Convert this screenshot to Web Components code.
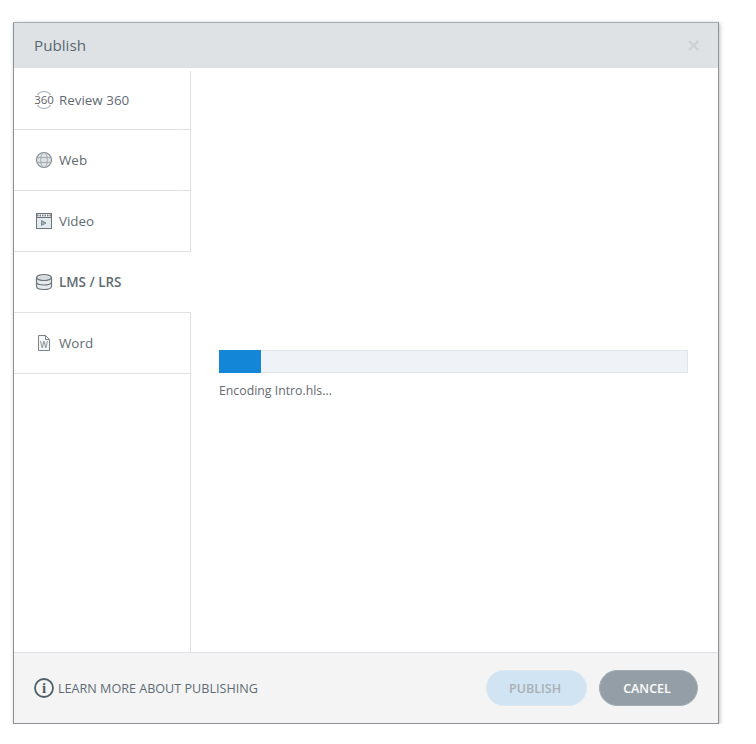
<!DOCTYPE html>
<html>
<head>
<meta charset="utf-8">
<title>Publish</title>
<style>
    html, body { margin: 0; background: #fff; }
    body { padding: 22px 0 0 13px; font-family: "Open Sans", "Liberation Sans", sans-serif; }
</style>
</head>
<body>
<publish-dialog>
    <span slot="title">Publish</span>
    <side-nav slot="nav">
        <nav-item>
            <svg slot="icon" width="20" height="20" viewBox="0 0 20 20" fill="none">
                <path d="M3.400 5a8 8 0 0 1 13.200 0M3.400 15a8 8 0 0 0 13.200 0" stroke="#9fb2bb" stroke-width="1.200"/>
                <text x="10" y="14" text-anchor="middle" font-family="Open Sans" font-size="11.500" fill="#5f6468">360</text>
            </svg>
            Review 360
        </nav-item>
        <nav-item>
            <svg slot="icon" width="20" height="20" viewBox="0 0 20 20" fill="none">
                <circle cx="10" cy="10" r="7.500" fill="#dbe1e4" stroke="#848b90" stroke-width="1.100"/>
                <ellipse cx="10" cy="10" rx="3.400" ry="7.500" stroke="#9aa2a7" stroke-width=".8"/>
                <path d="M3 7.500h14M3 12.500h14" stroke="#9aa2a7" stroke-width=".8"/>
            </svg>
            Web
        </nav-item>
        <nav-item>
            <svg slot="icon" width="20" height="20" viewBox="0 0 20 20" fill="none">
                <rect x="2.500" y="2.500" width="15" height="15" fill="#e2ebef" stroke="#6f767b"/>
                <path d="M3 3h14v3H3z" fill="#fff"/>
                <path d="M3 4.500h14" stroke="#6f767b" stroke-width="2" stroke-dasharray="1.500 1"/>
                <path d="M3 6.500h14" stroke="#6f767b"/>
                <path d="M7.500 9.500v5l4.500-2.500z" fill="#a9b0b4" stroke="#6f767b" stroke-width=".8"/>
            </svg>
            Video
        </nav-item>
        <nav-item active>
            <svg slot="icon" width="20" height="20" viewBox="0 0 20 20" fill="none">
                <path d="M2.500 5.500v9c0 1.700 3.400 3 7.500 3s7.500-1.300 7.500-3v-9" fill="#e6eaec"/>
                <ellipse cx="10" cy="5.500" rx="7.500" ry="3" fill="#d7dde0" stroke="#6d757a" stroke-width="1.200"/>
                <path d="M2.500 5.500v9c0 1.700 3.400 3 7.500 3s7.500-1.300 7.500-3v-9M2.500 10c0 1.700 3.400 3 7.500 3s7.500-1.300 7.500-3" stroke="#6d757a" stroke-width="1.200"/>
            </svg>
            LMS / LRS
        </nav-item>
        <nav-item>
            <svg slot="icon" width="20" height="20" viewBox="0 0 20 20" fill="none">
                <path d="M4.500 2.500h7l4 4v11h-11z" fill="#f4f7f8"/>
                <path d="M4.500 2.500h7l4 4v11h-11zM11.500 2.500v4h4" stroke="#7c8388"/>
                <text x="10" y="15" text-anchor="middle" font-family="Open Sans" font-size="8.500" fill="#6f767b">W</text>
            </svg>
            Word
        </nav-item>
    </side-nav>
    <progress-panel value="9" slot="body">Encoding Intro.hls...</progress-panel>
    <learn-link slot="footer-left">LEARN MORE ABOUT PUBLISHING</learn-link>
    <pill-button slot="footer-right" disabled>PUBLISH</pill-button>
    <pill-button slot="footer-right" style="--pill-width: 99px">CANCEL</pill-button>
</publish-dialog>

<script>
class PublishDialog extends HTMLElement {
    constructor() {
        super();
        this.attachShadow({ mode: 'open' });
        this.shadowRoot.innerHTML = `
            <style>
                :host {
                    display: flex;
                    flex-direction: column;
                    box-sizing: border-box;
                    width: 706px;
                    height: 702px;
                    background: #fff;
                    border: 1px solid #8e9296;
                    border-top-color: #a9acae;
                    box-shadow: 1px 1px 4px rgba(0, 0, 0, 0.25);
                }
                header {
                    display: flex;
                    align-items: center;
                    justify-content: space-between;
                    height: 45px;
                    flex: none;
                    padding: 0 17px 2px 20px;
                    box-sizing: border-box;
                    background: #dee2e5;
                    color: #5a6872;
                    font-size: 15.200px;
                }
                .close { color: #cdd0d3; font-size: 18px; line-height: 1; font-weight: 700; font-family: "DejaVu Sans", sans-serif; }
                main { flex: 1; display: flex; min-height: 0; padding-top: 3px; }
                .nav { flex: none; width: 177px; }
                .body { flex: 1; min-width: 0; }
                footer {
                    display: flex;
                    align-items: center;
                    justify-content: space-between;
                    height: 71px;
                    flex: none;
                    box-sizing: border-box;
                    padding: 0 20px;
                    background: #f4f4f4;
                    border-top: 1px solid #dde1e5;
                }
                .actions { display: flex; gap: 12px; }
            </style>
            <header><slot name="title"></slot><span class="close">×</span></header>
            <main>
                <div class="nav"><slot name="nav"></slot></div>
                <div class="body"><slot name="body"></slot></div>
            </main>
            <footer>
                <slot name="footer-left"></slot>
                <div class="actions"><slot name="footer-right"></slot></div>
            </footer>
        `;
    }
}
customElements.define('publish-dialog', PublishDialog);

class SideNav extends HTMLElement {
    constructor() {
        super();
        this.attachShadow({ mode: 'open' });
        this.shadowRoot.innerHTML = `
            <style>
                :host {
                    display: flex;
                    flex-direction: column;
                    box-sizing: border-box;
                    height: 100%;
                    border-right: 1px solid #dde1e5;
                }
            </style>
            <slot></slot>
        `;
    }
}
customElements.define('side-nav', SideNav);

class NavItem extends HTMLElement {
    constructor() {
        super();
        this.attachShadow({ mode: 'open' });
        this.shadowRoot.innerHTML = `
            <style>
                :host {
                    display: flex;
                    align-items: center;
                    gap: 5px;
                    box-sizing: border-box;
                    height: 61px;
                    padding-left: 20px;
                    color: #5f6b72;
                    font-size: 13.400px;
                    border-bottom: 1px solid #dde1e5;
                }
                :host(:first-child) { height: 59px; }
                :host([active]) {
                    width: 177px;
                    background: #fff;
                    font-weight: 600;
                    font-size: 13.400px;
                    color: #5f6b72;
                }
                .icon { display: flex; width: 20px; height: 20px; }
                .text { margin-top: -1px; }
            </style>
            <span class="icon"><slot name="icon"></slot></span>
            <span class="text"><slot></slot></span>
        `;
    }
}
customElements.define('nav-item', NavItem);

class ProgressPanel extends HTMLElement {
    constructor() {
        super();
        this.attachShadow({ mode: 'open' });
        this.shadowRoot.innerHTML = `
            <style>
                :host {
                    display: flex;
                    flex-direction: column;
                    justify-content: center;
                    box-sizing: border-box;
                    height: 100%;
                    padding: 25px 30px 0 28px;
                    color: #666a70;
                    font-size: 12.300px;
                }
                .track {
                    box-sizing: border-box;
                    height: 23px;
                    background: #eff3f7;
                    border: 1px solid #e2e6ea;
                    border-width: 1px 1px 1px 0;
                }
                .fill { height: 23px; margin-top: -1px; background: #1486d8; }
                .label { margin-top: 9px; line-height: 17px; }
            </style>
            <div class="track"><div class="fill"></div></div>
            <div class="label"><slot></slot></div>
        `;
        this.shadowRoot.querySelector('.fill').style.width = this.getAttribute('value') + '%';
    }
}
customElements.define('progress-panel', ProgressPanel);

class LearnLink extends HTMLElement {
    constructor() {
        super();
        this.attachShadow({ mode: 'open' });
        this.shadowRoot.innerHTML = `
            <style>
                :host {
                    display: flex;
                    align-items: center;
                    gap: 4px;
                    color: #5f6b74;
                    font-size: 12.600px;
                }
                svg { display: block; }
            </style>
            <svg width="20" height="20" viewBox="0 0 20 20" fill="none">
                <circle cx="10" cy="10" r="9" stroke="#4f5f68" stroke-width="1.800"/>
                <text x="10" y="15" text-anchor="middle" font-family="Liberation Serif" font-weight="700" font-size="15" fill="#4f5f68">i</text>
            </svg>
            <slot></slot>
        `;
    }
}
customElements.define('learn-link', LearnLink);

class PillButton extends HTMLElement {
    constructor() {
        super();
        this.attachShadow({ mode: 'open' });
        this.shadowRoot.innerHTML = `
            <style>
                :host {
                    display: flex;
                    align-items: center;
                    justify-content: center;
                    box-sizing: border-box;
                    width: var(--pill-width, 101px);
                    height: 36px;
                    padding-right: 3px;
                    border-radius: 18px;
                    border: 1px solid #a4adb4;
                    background: #949ea6;
                    color: #fff;
                    font-size: 12.500px;
                    font-weight: 600;
                }
                :host([disabled]) {
                    background: #d0e4f3;
                    border-color: #dae7f1;
                    color: #a9afb4;
                }
            </style>
            <slot></slot>
        `;
    }
}
customElements.define('pill-button', PillButton);
</script>
</body>
</html>
